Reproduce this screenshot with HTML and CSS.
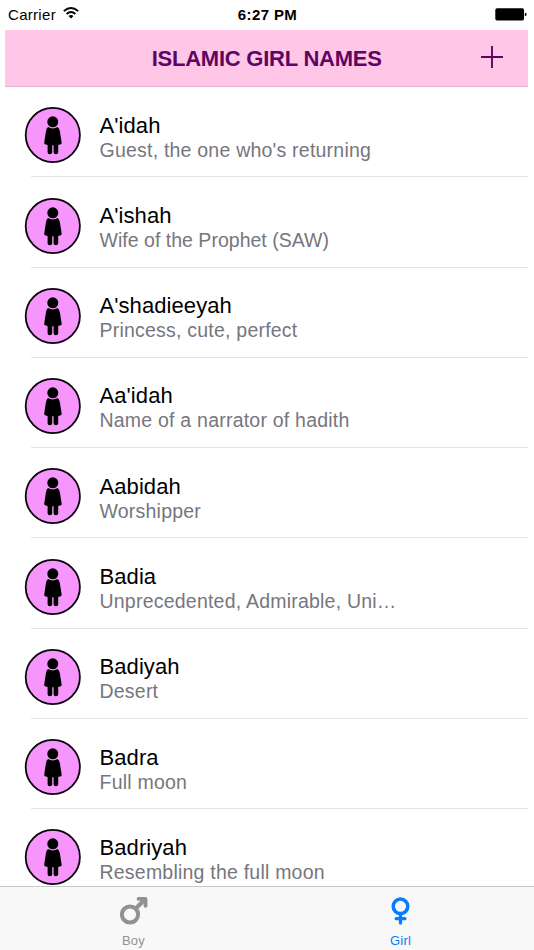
FILE: index.html
```
<!DOCTYPE html>
<html lang="en">
<head>
<meta charset="utf-8">
<title>Islamic Girl Names</title>
<link rel="stylesheet" href="styles.css">
</head>
<body>
<svg class="defs" width="0" height="0" aria-hidden="true">
  <symbol id="girl" viewBox="0 0 58 58">
    <circle cx="28.8" cy="29" r="27.1" fill="#f695fb" stroke="#0b040c" stroke-width="1.8"/>
    <circle cx="28.8" cy="15.8" r="5.5"/>
    <path d="M24 21Q28.8 23.9 33.6 21Q35.4 22.2 35.9 25.5L37.7 36.8Q37.8 38.5 36 38.6L34.2 38.9V46.3Q34.2 48.2 31.9 48.2Q29.6 48.2 29.6 46.3V39.2H28.2V46.3Q28.2 48.2 25.9 48.2Q23.6 48.2 23.6 46.3V38.9L21.8 38.6Q20 38.5 20.2 36.8L21.9 25.5Q22.3 22.2 24 21Z"/>
  </symbol>
</svg>
<div class="screen">
  <header class="status">
    <div class="carrier"><span>Carrier</span>
      <svg width="16" height="12" viewBox="0 0 16 12"><g fill="none" stroke="#000" stroke-width="1.9"><path d="M.8 4.1Q8-2.1 15.2 4.1"/><path d="M3.6 7Q8 3.2 12.4 7"/></g><path d="M5.5 8.9Q8 6.9 10.5 8.9L8 11.5Z"/></svg>
    </div>
    <div class="time">6:27 PM</div>
    <div class="battery"><svg width="32" height="13" viewBox="0 0 32 13"><rect x=".3" y=".3" width="28.7" height="12.2" rx="1.7"/><path d="M29.8 4.5Q31.6 5 31.6 6.4T29.8 8.3Z"/></svg></div>
  </header>
  <nav class="navbar">
    <h1>ISLAMIC GIRL NAMES</h1>
    <svg class="add" width="22" height="22" viewBox="0 0 22 22"><path d="M0 11H22M11 0V22" stroke="#5d0560" stroke-width="1.9"/></svg>
  </nav>
  <main class="list">
    <div class="row"><svg class="avatar"><use href="#girl"/></svg><div class="copy"><h2>A'idah</h2><p>Guest, the one who's returning</p></div></div>
    <div class="row"><svg class="avatar"><use href="#girl"/></svg><div class="copy"><h2>A'ishah</h2><p class="tight">Wife of the Prophet (SAW)</p></div></div>
    <div class="row"><svg class="avatar"><use href="#girl"/></svg><div class="copy"><h2>A'shadieeyah</h2><p>Princess, cute, perfect</p></div></div>
    <div class="row"><svg class="avatar"><use href="#girl"/></svg><div class="copy"><h2>Aa'idah</h2><p>Name of a narrator of hadith</p></div></div>
    <div class="row"><svg class="avatar"><use href="#girl"/></svg><div class="copy"><h2>Aabidah</h2><p>Worshipper</p></div></div>
    <div class="row"><svg class="avatar"><use href="#girl"/></svg><div class="copy"><h2>Badia</h2><p>Unprecedented, Admirable, Uni…</p></div></div>
    <div class="row"><svg class="avatar"><use href="#girl"/></svg><div class="copy"><h2>Badiyah</h2><p>Desert</p></div></div>
    <div class="row"><svg class="avatar"><use href="#girl"/></svg><div class="copy"><h2>Badra</h2><p>Full moon</p></div></div>
    <div class="row"><svg class="avatar"><use href="#girl"/></svg><div class="copy"><h2>Badriyah</h2><p>Resembling the full moon</p></div></div>
  </main>
  <footer class="tabs">
    <div class="tab">
      <svg width="28" height="29" viewBox="0 0 28 29" fill="none" stroke="currentColor"><circle cx="10" cy="18.5" r="8.1" stroke-width="4"/><path d="M15.5 12.7L24.5 3.7" stroke-width="4.2"/><path d="M18.6 2.9H25.5V9.8" stroke-width="3.9" stroke-linecap="round" stroke-linejoin="round"/></svg>
      <span>Boy</span>
    </div>
    <div class="tab active">
      <svg width="28" height="29" viewBox="0 0 28 29" fill="none" stroke="currentColor" stroke-linecap="round"><circle cx="13.5" cy="10.3" r="7.3" stroke-width="3.5"/><path d="M13.5 18V27M9.2 22.7H17.9" stroke-width="3.3"/></svg>
      <span>Girl</span>
    </div>
  </footer>
</div>
</body>
</html>
```
FILE: styles.css
```
* { box-sizing: border-box; }
body { margin: 0; background: #fff; font-family: "Liberation Sans", Arial, sans-serif; }
.defs { display: block; }
.screen { height: 950px; display: flex; flex-direction: column; overflow: hidden; }
h1, h2, p { margin: 0; font-weight: 400; white-space: nowrap; }
.status { flex: none; height: 30px; padding: 0 7px 2px 8px; display: grid; grid-template-columns: 1fr auto 1fr; align-items: center; font-size: 15px; }
.carrier { display: flex; align-items: center; gap: 7px; letter-spacing: .3px; }
.carrier svg { margin-top: -3px; }
.time { font-weight: 700; letter-spacing: .4px; }
.battery { display: flex; justify-content: flex-end; }
.navbar { flex: none; height: 57px; margin: 0 5.6px 0 5.4px; padding: 0 25.5px 0 146.3px; display: flex; justify-content: space-between; align-items: center; background: #ffc6e7; border-bottom: 1px solid #e3b4d0; color: #5d0560; }
h1 { font-size: 22px; line-height: 26px; font-weight: 700; letter-spacing: -.24px; padding-top: 1px; }
.add { margin-top: -2px; }
.list { flex: 1; min-height: 0; overflow: hidden; }
.row { height: 90.27px; margin: 0 5.6px 0 31px; border-bottom: 1px solid #e3e3e5; display: flex; align-items: flex-start; }
.avatar { flex: none; width: 58px; height: 58px; margin: 19.3px 17.5px 0 -7px; }
.copy { padding-top: 25.7px; }
h2 { font-size: 22px; line-height: 25px; color: #000; letter-spacing: .08px; }
p { font-size: 19.5px; line-height: 24px; color: #76767e; letter-spacing: .22px; }
.tight { letter-spacing: .02px; }
.tabs { flex: none; height: 64px; background: #f8f8f8; border-top: 1px solid #c8c8c8; display: grid; grid-template-columns: 1fr 1fr; }
.tab { display: flex; flex-direction: column; align-items: center; padding-top: 9px; color: #929292; font-size: 13px; line-height: 16px; letter-spacing: .2px; }
.tab span { margin-top: 8px; }
.active { color: #087cff; }
```
